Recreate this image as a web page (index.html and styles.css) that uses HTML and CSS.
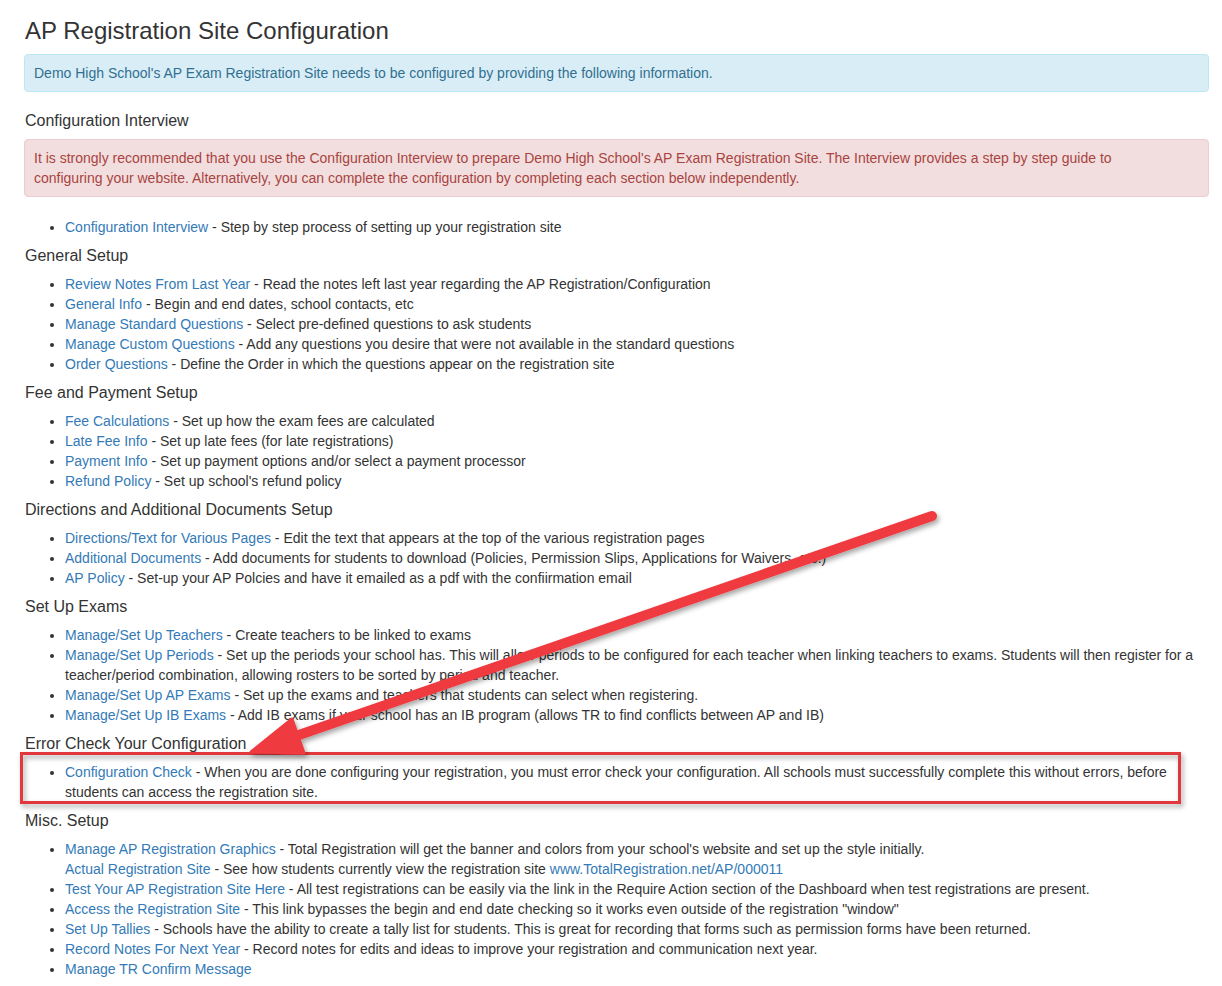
FILE: index.html
```html
<!DOCTYPE html>
<html>
<head>
<meta charset="utf-8">
<title>AP Registration Site Configuration</title>
<link rel="stylesheet" href="styles.css">
</head>
<body>
<div class="page">
  <h1 class="title">AP Registration Site Configuration</h1>
  <div class="alert alert-info">Demo High School's AP Exam Registration Site needs to be configured by providing the following information.</div>

  <h4 class="section">Configuration Interview</h4>
  <div class="alert alert-danger">It is strongly recommended that you use the Configuration Interview to prepare Demo High School's AP Exam Registration Site. The Interview provides a step by step guide to configuring your website. Alternatively, you can complete the configuration by completing each section below independently.</div>
  <ul class="list">
    <li><a href="#">Configuration Interview</a> - Step by step process of setting up your registration site</li>
  </ul>

  <h4 class="section">General Setup</h4>
  <ul class="list">
    <li><a href="#">Review Notes From Last Year</a> - Read the notes left last year regarding the AP Registration/Configuration</li>
    <li><a href="#">General Info</a> - Begin and end dates, school contacts, etc</li>
    <li><a href="#">Manage Standard Questions</a> - Select pre-defined questions to ask students</li>
    <li><a href="#">Manage Custom Questions</a> - Add any questions you desire that were not available in the standard questions</li>
    <li><a href="#">Order Questions</a> - Define the Order in which the questions appear on the registration site</li>
  </ul>

  <h4 class="section">Fee and Payment Setup</h4>
  <ul class="list">
    <li><a href="#">Fee Calculations</a> - Set up how the exam fees are calculated</li>
    <li><a href="#">Late Fee Info</a> - Set up late fees (for late registrations)</li>
    <li><a href="#">Payment Info</a> - Set up payment options and/or select a payment processor</li>
    <li><a href="#">Refund Policy</a> - Set up school's refund policy</li>
  </ul>

  <h4 class="section">Directions and Additional Documents Setup</h4>
  <ul class="list">
    <li><a href="#">Directions/Text for Various Pages</a> - Edit the text that appears at the top of the various registration pages</li>
    <li><a href="#">Additional Documents</a> - Add documents for students to download (Policies, Permission Slips, Applications for Waivers, etc.)</li>
    <li><a href="#">AP Policy</a> - Set-up your AP Polcies and have it emailed as a pdf with the confiirmation email</li>
  </ul>

  <h4 class="section">Set Up Exams</h4>
  <ul class="list">
    <li><a href="#">Manage/Set Up Teachers</a> - Create teachers to be linked to exams</li>
    <li><a href="#">Manage/Set Up Periods</a> - Set up the periods your school has. This will allow periods to be configured for each teacher when linking teachers to exams. Students will then register for a teacher/period combination, allowing rosters to be sorted by period and teacher.</li>
    <li><a href="#">Manage/Set Up AP Exams</a> - Set up the exams and teachers that students can select when registering.</li>
    <li><a href="#">Manage/Set Up IB Exams</a> - Add IB exams if your school has an IB program (allows TR to find conflicts between AP and IB)</li>
  </ul>

  <h4 class="section">Error Check Your Configuration</h4>
  <ul class="list">
    <li><a href="#">Configuration Check</a> - When you are done configuring your registration, you must error check your configuration. All schools must successfully complete this without errors, before students can access the registration site.</li>
  </ul>

  <h4 class="section">Misc. Setup</h4>
  <ul class="list">
    <li><a href="#">Manage AP Registration Graphics</a> - Total Registration will get the banner and colors from your school's website and set up the style initially.<br><a href="#">Actual Registration Site</a> - See how students currently view the registration site <a href="#">www.TotalRegistration.net/AP/000011</a></li>
    <li><a href="#">Test Your AP Registration Site Here</a> - All test registrations can be easily via the link in the Require Action section of the Dashboard when test registrations are present.</li>
    <li><a href="#">Access the Registration Site</a> - This link bypasses the begin and end date checking so it works even outside of the registration "window"</li>
    <li><a href="#">Set Up Tallies</a> - Schools have the ability to create a tally list for students. This is great for recording that forms such as permission forms have been returned.</li>
    <li><a href="#">Record Notes For Next Year</a> - Record notes for edits and ideas to improve your registration and communication next year.</li>
    <li><a href="#">Manage TR Confirm Message</a></li>
  </ul>
</div>

<svg class="annotation" width="1222" height="986" viewBox="0 0 1222 986" xmlns="http://www.w3.org/2000/svg">
  <defs>
    <filter id="shadow" x="-10%" y="-10%" width="120%" height="130%">
      <feDropShadow dx="2" dy="3" stdDeviation="2.5" flood-color="#000" flood-opacity="0.35"/>
    </filter>
  </defs>
  <rect x="21.5" y="753.5" width="1158" height="49" fill="none" stroke="#e2393d" stroke-width="3" filter="url(#shadow)"/>
  <g filter="url(#shadow)">
    <line x1="932" y1="516" x2="296" y2="736" stroke="#ef3a40" stroke-width="10" stroke-linecap="round"/>
    <polygon points="251,752 292,719 304,753" fill="#ef3a40" stroke="#ef3a40" stroke-width="3" stroke-linejoin="round"/>
  </g>
</svg>
</body>
</html>
```

FILE: styles.css
```css
html, body {
  margin: 0;
  padding: 0;
  background: #ffffff;
}

body {
  font-family: "Liberation Sans", Arial, Helvetica, sans-serif;
  font-size: 14px;
  line-height: 20px;
  color: #333333;
}

.page {
  padding: 0 13px 20px 24px;
}

.title {
  font-size: 24px;
  font-weight: 400;
  line-height: 1.1;
  margin: 18px 0 10px 1px;
  color: #333333;
}

.alert {
  border: 1px solid transparent;
  border-radius: 4px;
  padding: 8px 35px 8px 9px;
}

.alert-info {
  background: #d9edf7;
  border-color: #bce8f1;
  color: #31708f;
  margin-bottom: 18px;
}

.alert-danger {
  background: #f2dede;
  border-color: #ebccd1;
  color: #a94442;
  margin-bottom: 20px;
}

.section {
  font-size: 16px;
  font-weight: 400;
  line-height: 20px;
  padding-top: 1px;
  margin: 0 0 8px 1px;
  color: #333333;
}

.list {
  margin: 0 0 8px 1px;
  padding-left: 40px;
}

a {
  color: #337ab7;
  text-decoration: none;
}

.annotation {
  position: absolute;
  top: 0;
  left: 0;
  pointer-events: none;
}
```
